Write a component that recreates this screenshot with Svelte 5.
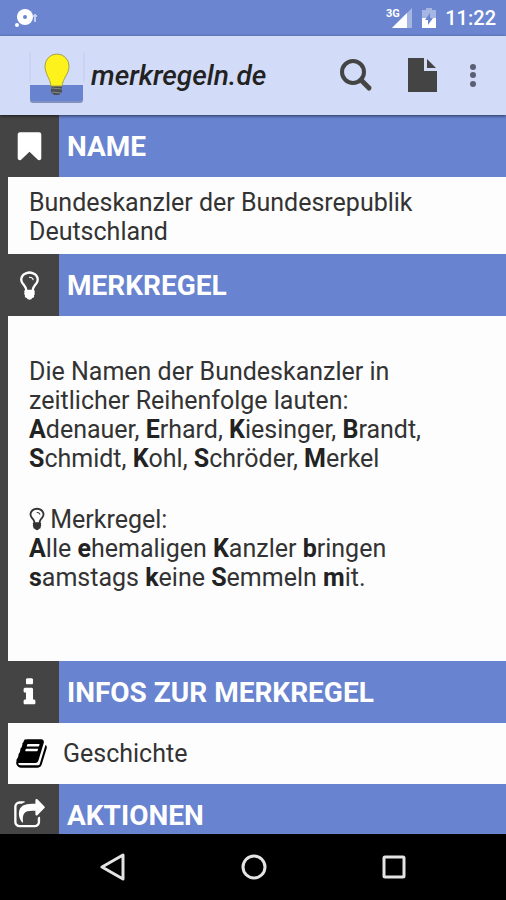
<script>
  const icons = {
    bookmark:
      'M1420 128q23 0 44 9 33 13 52.500 41t19.500 62v1289q0 34-19.500 62t-52.500 41q-19 8-44 8-48 0-83-32l-441-424-441 424q-36 33-83 33-23 0-44-9-33-13-52.500-41t-19.500-62v-1289q0-34 19.500-62t52.500-41q21-9 44-9h1048z',
    bulb: 'M1120 576q0 13-9.500 22.500t-22.500 9.500-22.500-9.500-9.500-22.500q0-46-54-71t-106-25q-13 0-22.500-9.500t-9.500-22.500 9.500-22.500 22.500-9.500q50 0 99.500 16t87 54 37.500 90zm160 0q0-72-34.500-134t-90-101.500-123-62-136.500-22.500-136.500 22.500-123 62-90 101.500-34.500 134q0 101 68 180 10 11 30.500 33t30.500 33q128 153 141 298h228q13-145 141-298 10-11 30.500-33t30.500-33q68-79 68-180zm128 0q0 155-103 268-45 49-74.500 87t-59.500 95.500-34 107.500q47 28 47 82 0 37-25 64 25 27 25 64 0 52-45 81 13 23 13 47 0 46-31.500 71t-77.500 25q-20 44-60 70t-87 26-87-26-60-70q-46 0-77.500-25t-31.500-71q0-24 13-47-45-29-45-81 0-37 25-64-25-27-25-64 0-54 47-82-4-50-34-107.500t-59.500-95.500-74.500-87q-103-113-103-268 0-99 44.500-184.500t117-142 164-89 186.500-32.500 186.500 32.500 164 89 117 142 44.500 184.500z',
    info: 'M1216 1344v128q0 26-19 45t-45 19h-512q-26 0-45-19t-19-45v-128q0-26 19-45t45-19h64v-384h-64q-26 0-45-19t-19-45v-128q0-26 19-45t45-19h384q26 0 45 19t19 45v576h64q26 0 45 19t19 45zm-128-1152v192q0 26-19 45t-45 19h-256q-26 0-45-19t-19-45v-192q0-26 19-45t45-19h256q26 0 45 19t19 45z',
    book: 'M1703 478q40 57 18 129l-275 906q-19 64-76.500 107.500t-122.500 43.500h-923q-77 0-148.500-53.500t-99.500-131.500q-24-67-2-127 0-4 3-27t4-37q1-8-3-21.500t-3-19.500q2-11 8-21t16.500-23.500 16.500-23.500q23-38 45-91.500t30-91.500q3-10 .5-30t-.5-28q3-11 17-28t17-23q21-36 42-92t25-90q1-9-2.500-32t.5-28q4-13 22-30.500t22-22.500q19-26 42.500-84.500t27.500-96.500q1-8-3-25.500t-2-26.500q2-8 9-18t18-23 17-21q8-12 16.500-30.500t15-35 16-36 19.500-32 26.500-23.500 36-11.500 47.500 5.500l-1 3q38-9 51-9h761q74 0 114 56t18 130l-274 906q-36 119-71.500 153.500t-128.500 34.500h-869q-27 0-38 15-11 16-1 43 24 70 144 70h923q29 0 56-15.500t35-41.500l300-987q7-22 5-57 38 15 59 43zm-1064 2q-4 13 2 22.500t20 9.500h608q13 0 25.500-9.500t16.500-22.500l21-64q4-13-2-22.500t-20-9.500h-608q-13 0-25.500 9.500t-16.500 22.500zm-83 256q-4 13 2 22.500t20 9.500h608q13 0 25.500-9.500t16.500-22.500l21-64q4-13-2-22.500t-20-9.500h-608q-13 0-25.500 9.500t-16.500 22.500z',
    share:
      'M1472 989v259q0 119-84.500 203.500t-203.500 84.500h-832q-119 0-203.500-84.500t-84.500-203.500v-832q0-119 84.500-203.500t203.500-84.500h255q13 0 22.500 9.500t9.500 22.500q0 27-26 32-77 26-133 60-10 4-16 4h-112q-66 0-113 47t-47 113v832q0 66 47 113t113 47h832q66 0 113-47t47-113v-214q0-19 18-29 28-13 54-37 16-16 35-8 21 9 21 29zm237-496l-384 384q-18 19-45 19-12 0-25-5-39-17-39-59v-192h-160q-323 0-438 131-119 137-74 473 3 23-20 34-8 2-12 2-16 0-26-13-10-14-21-31t-39.500-68.500-49.500-99.500-38.500-114-17.500-122q0-49 3.500-91t14-90 28-88 47-81.500 68.500-74 94.500-61.500 124.500-48.500 159.500-30.500 196.500-11h160v-192q0-42 39-59 13-5 25-5 26 0 45 19l384 384q19 19 19 45t-19 45z',
  };
</script>

{#snippet icon(name)}
  <svg class="icon" viewBox="0 0 1792 1792" aria-hidden="true"><path d={icons[name]} /></svg>
{/snippet}

{#snippet heading(name, title)}
  <h2>
    <span class="badge">{@render icon(name)}</span>
    {title}
  </h2>
{/snippet}

<div class="app">
  <div class="status">
    <svg class="notice" width="26" height="22" viewBox="0 0 26 22" aria-hidden="true">
      <circle cx="13" cy="10" r="8" />
      <circle cx="5" cy="18" r="2" />
      <path d="M23 7v8M21 9h4" stroke="#fff" stroke-opacity="0.6" stroke-width="2" />
      <circle cx="13" cy="10" r="2" fill="#6b85d0" />
    </svg>
    <svg width="27" height="22" viewBox="0 0 27 22" aria-hidden="true">
      <path d="M26 1v20H6z" opacity="0.4" />
      <path d="M21 6v15H6z" />
      <text x="0" y="10" class="network">3G</text>
    </svg>
    <svg width="16" height="22" viewBox="0 0 16 22" aria-hidden="true">
      <path d="M5 1h6v2h4v8H1V3h4z" opacity="0.4" />
      <path d="M1 11h14v10H1z" />
      <path d="M9 6l-5 7h3v5l5-7H9z" fill="#6b85d0" />
    </svg>
    <time>11:22</time>
  </div>

  <header>
    <svg class="logo" width="56" height="56" viewBox="0 0 56 56" aria-hidden="true">
      <path d="M2 4v30M56 4v30" stroke="#c3ceef" />
      <path d="M2 38h53v14q0 3-3 3H5q-3 0-3-3z" fill="#8290bd" />
      <path d="M2 37h53v13q0 3-3 3H5q-3 0-3-3z" fill="#6883cf" />
      <path d="M23 37h11v7l-3 3h-5l-3-3z" fill="#4c4f55" />
      <path d="M23 40l11 1M24 44l9 1" stroke="#85888d" />
      <path
        d="M23 38c-1-8-6-12-6-20a12 12 0 0 1 24 0c0 8-6 12-7 20z"
        fill="#fdf21c"
        stroke="#a5a04e"
      />
    </svg>
    <h1>merkregeln.de</h1>
    <button aria-label="Suche">
      <svg width="36" height="36" viewBox="0 0 36 36" aria-hidden="true">
        <circle cx="15" cy="14" r="11" fill="none" stroke="#444" stroke-width="4" />
        <path d="M23 22l8 8" stroke="#444" stroke-width="5" stroke-linecap="round" />
      </svg>
    </button>
    <button class="page" aria-label="Neue Seite">
      <svg width="30" height="36" viewBox="0 0 30 36" aria-hidden="true">
        <path d="M0 0h16v13h13v21H0z" />
        <path d="M19 1v9h9z" />
      </svg>
    </button>
    <button class="more" aria-label="Mehr">
      <svg width="8" height="24" viewBox="0 0 8 24" aria-hidden="true">
        <circle cx="4" cy="3" r="3" />
        <circle cx="4" cy="11" r="3" />
        <circle cx="4" cy="20" r="3" />
      </svg>
    </button>
  </header>

  <main>
    <section>
      {@render heading('bookmark', 'NAME')}
      <div class="panel">
        <p>Bundeskanzler der Bundesrepublik Deutschland</p>
      </div>
    </section>

    <section>
      {@render heading('bulb', 'MERKREGEL')}
      <div class="panel rule">
        <p>
          Die Namen der Bundeskanzler in zeitlicher Reihenfolge lauten:<br />
          <b>A</b>denauer, <b>E</b>rhard, <b>K</b>iesinger, <b>B</b>randt, <b>S</b>chmidt,
          <b>K</b>ohl, <b>S</b>chröder, <b>M</b>erkel
        </p>
        <p>
          <span class="inline">{@render icon('bulb')}</span> Merkregel:<br />
          <b>A</b>lle <b>e</b>hemaligen <b>K</b>anzler <b>b</b>ringen <b>s</b>amstags
          <b>k</b>eine <b>S</b>emmeln <b>m</b>it.
        </p>
      </div>
    </section>

    <section>
      {@render heading('info', 'INFOS ZUR MERKREGEL')}
      <a class="topic" href="#geschichte">{@render icon('book')} Geschichte</a>
    </section>

    <section>
      {@render heading('share', 'AKTIONEN')}
    </section>
  </main>

  <nav>
    <button aria-label="Zurück">
      <svg width="28" height="28" viewBox="0 0 28 28" aria-hidden="true">
        <path d="M23 2v24L2 14z" />
      </svg>
    </button>
    <button aria-label="Start">
      <svg width="28" height="28" viewBox="0 0 28 28" aria-hidden="true">
        <circle cx="14" cy="14" r="11" />
      </svg>
    </button>
    <button aria-label="Übersicht">
      <svg width="28" height="28" viewBox="0 0 28 28" aria-hidden="true">
        <rect x="4" y="4" width="20" height="20" rx="1" />
      </svg>
    </button>
  </nav>
</div>

<style>
  :global(body) {
    margin: 0;
  }

  .app {
    display: flex;
    flex-direction: column;
    height: 100vh;
    font-family: Roboto, 'Liberation Sans', sans-serif;
    font-size: 25px;
    line-height: 29px;
    color: #333;
    background: #444;
  }

  .status {
    display: flex;
    flex: none;
    align-items: center;
    gap: 8px;
    height: 36px;
    padding: 0 10px 0 12px;
    font-size: 20px;
    font-weight: 500;
    color: #fff;
    background: #6b85d0;
  }

  .status svg {
    fill: #fff;
  }

  .notice {
    margin-right: auto;
  }

  .network {
    font-size: 11px;
    font-weight: 700;
  }

  header {
    position: relative;
    display: flex;
    flex: none;
    align-items: center;
    height: 79px;
    padding: 0 16px 0 28px;
    background: #d2dbf7;
    box-shadow: 0 1px 3px rgba(0, 0, 0, 0.6);
  }

  h1 {
    flex: 1;
    margin: 0 0 0 7px;
    font-size: 28px;
    font-style: italic;
    font-weight: 500;
    line-height: 32px;
    color: #222;
  }

  .logo {
    flex: none;
    overflow: visible;
  }

  button {
    display: flex;
    padding: 0;
    background: none;
    border: 0;
    cursor: pointer;
  }

  header button {
    fill: #444;
  }

  .page {
    margin: 0 31px 0 34px;
  }

  .more {
    fill: #5a6072;
    margin-right: 13px;
  }

  main {
    flex: 1;
    min-height: 0;
    overflow: hidden;
  }

  h2 {
    display: flex;
    align-items: center;
    gap: 8px;
    height: 62px;
    margin: 0;
    font-size: 28px;
    font-weight: 700;
    color: #fff;
    background: #6883d0;
  }

  .badge {
    display: flex;
    align-items: center;
    justify-content: center;
    width: 59px;
    height: 100%;
    background: #444;
  }

  .icon {
    width: 33px;
    height: 33px;
    fill: currentColor;
  }

  .panel,
  .topic {
    margin-left: 8px;
    background: #fdfdfd;
  }

  .panel {
    padding: 11px 60px 8px 21px;
  }

  .rule {
    padding-top: 41px;
    padding-bottom: 69px;
  }

  p {
    margin: 0;
  }

  p + p {
    margin-top: 32px;
  }

  b {
    font-weight: 700;
    color: #222;
  }

  .inline {
    display: inline-flex;
    justify-content: center;
    width: 15px;
    vertical-align: -4px;
  }

  .inline .icon {
    flex: none;
    width: 26px;
    height: 26px;
  }

  .topic {
    display: flex;
    align-items: center;
    gap: 15px;
    height: 61px;
    padding-left: 7px;
    color: #333;
    text-decoration: none;
  }

  .topic .icon {
    color: #000;
  }

  nav {
    display: flex;
    flex: none;
    align-items: center;
    justify-content: center;
    gap: 112px;
    height: 66px;
    padding-left: 2px;
    background: #000;
  }

  nav svg {
    fill: none;
    stroke: #e4e4e4;
    stroke-width: 3;
    stroke-linejoin: round;
  }
</style>
